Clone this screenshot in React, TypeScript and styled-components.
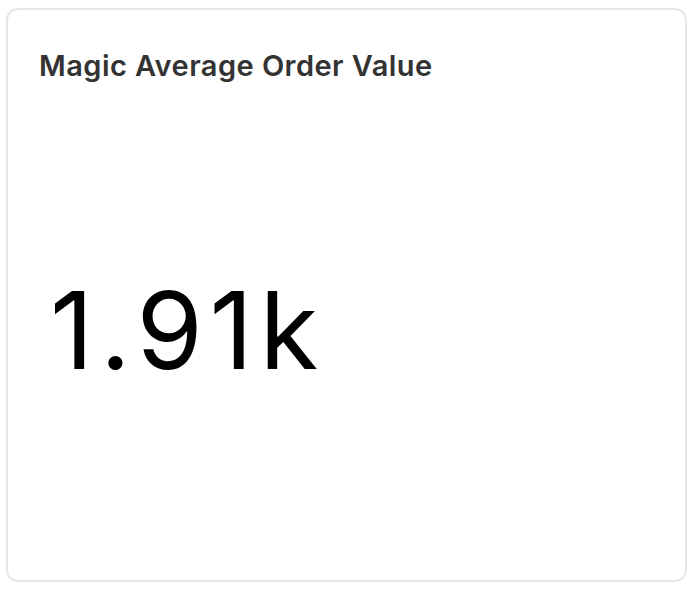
import React from "react";
import styled, { createGlobalStyle } from "styled-components";

const Global = createGlobalStyle`
  html, body { margin: 0; padding: 0; background: #ffffff; }
  body { font-family: Inter, "Noto Sans", sans-serif; }
`;

const Page = styled.div`
  padding: 8px 5px 8px 6px;
  box-sizing: border-box;
  width: 692px;
  height: 590px;
`;

const Card = styled.div`
  box-sizing: border-box;
  width: 681px;
  height: 574px;
  border: 2px solid #e5e7eb;
  border-radius: 12px;
  background: #fff;
  display: flex;
  flex-direction: column;
  padding: 37px 32px 32px 31px;
`;

const Title = styled.h2`
  margin: 0;
  font-family: Inter, sans-serif;
  font-weight: 600;
  font-size: 29px;
  line-height: 38px;
  letter-spacing: 0.45px;
  color: #333333;
`;

const Body = styled.div`
  flex: 1;
  display: flex;
  align-items: center;
  padding-top: 28px;
`;

const Value = styled.div`
  font-family: Inter, sans-serif;
  font-weight: 400;
  font-size: 107px;
  line-height: 1;
  letter-spacing: 6.5px;
  color: #000;
  padding-left: 11px;
`;

export default function App() {
  return (
    <>
      <Global />
      <Page>
        <Card>
          <Title>Magic Average Order Value</Title>
          <Body>
            <Value>1.91k</Value>
          </Body>
        </Card>
      </Page>
    </>
  );
}
